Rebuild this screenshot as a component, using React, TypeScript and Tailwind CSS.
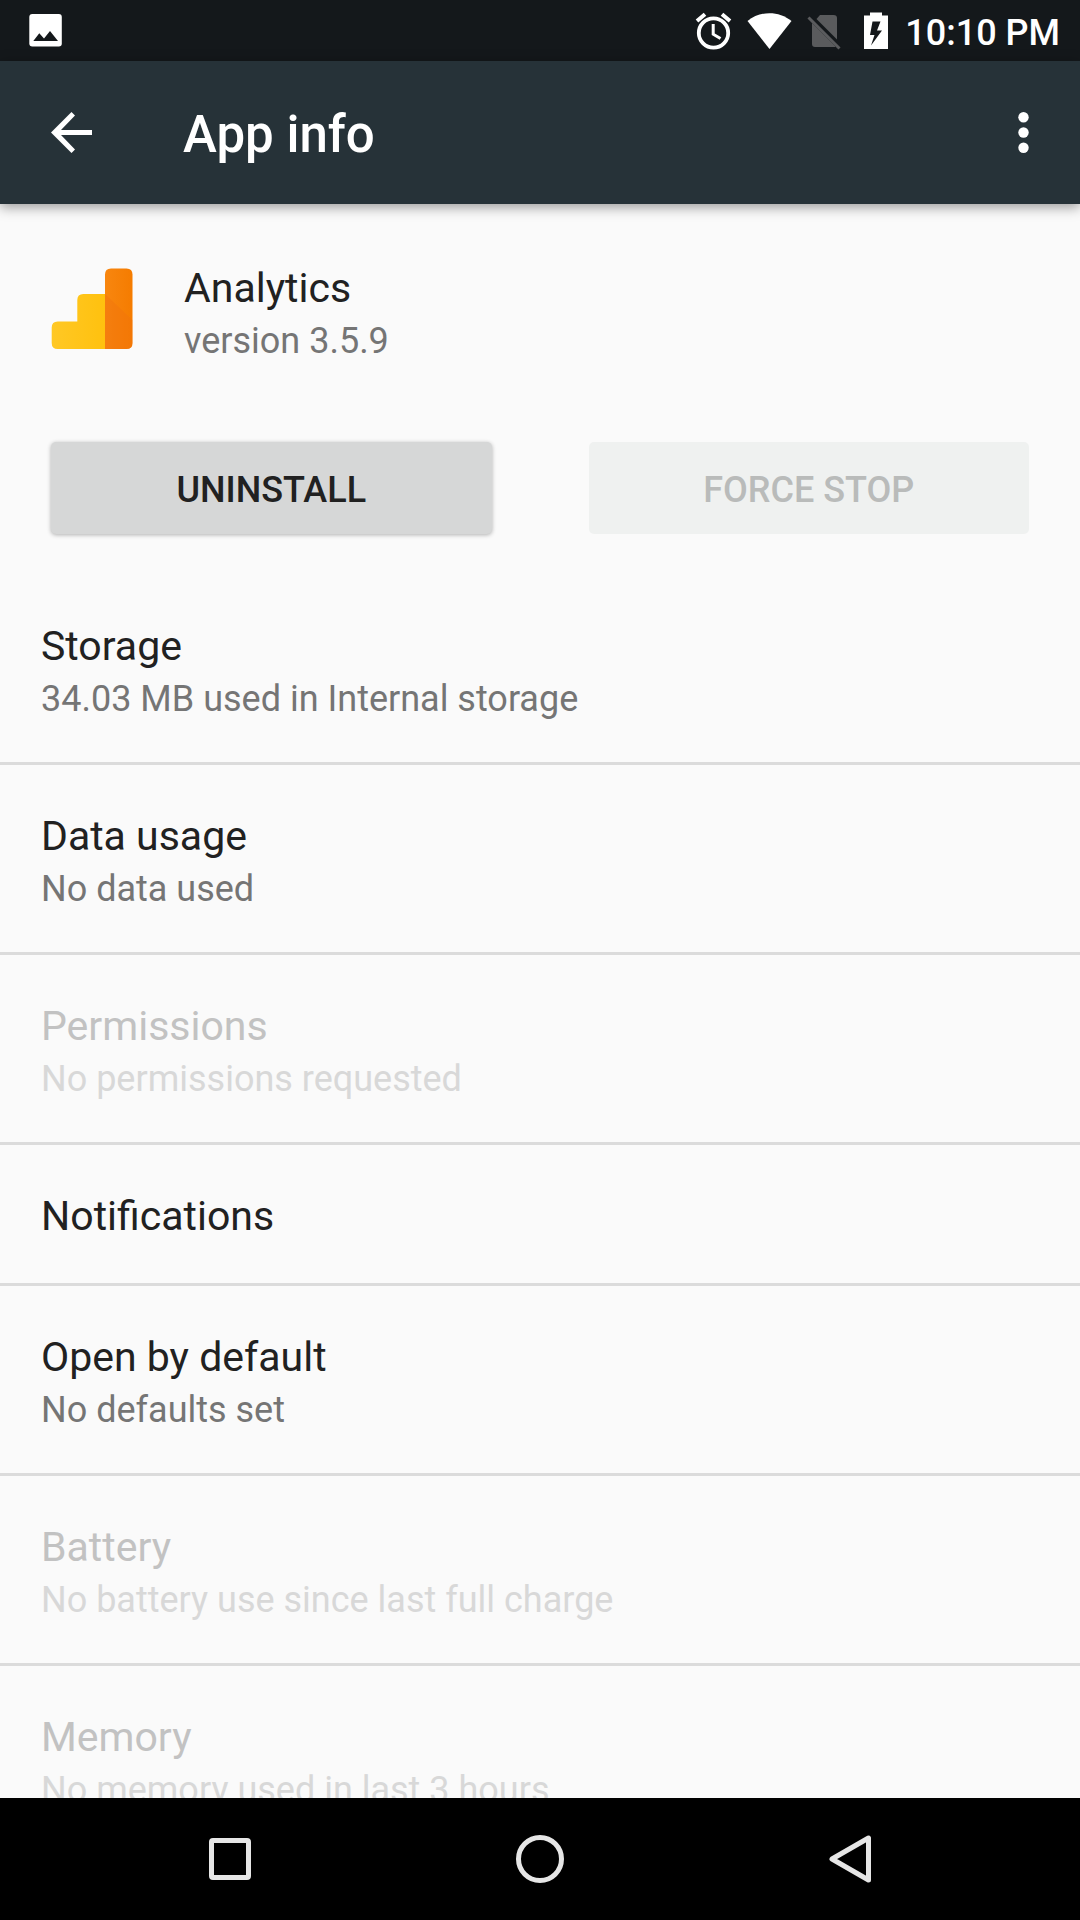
import type { ReactNode } from "react";

type InfoRow = {
  title: string;
  summary?: string;
  disabled?: boolean;
};

const rows: InfoRow[] = [
  { title: "Storage", summary: "34.03 MB used in Internal storage" },
  { title: "Data usage", summary: "No data used" },
  { title: "Permissions", summary: "No permissions requested", disabled: true },
  { title: "Notifications" },
  { title: "Open by default", summary: "No defaults set" },
  { title: "Battery", summary: "No battery use since last full charge", disabled: true },
  { title: "Memory", summary: "No memory used in last 3 hours", disabled: true },
];

function StatusBar() {
  return (
    <div className="flex h-[61px] shrink-0 items-center justify-between bg-[#14181b] pr-5 pl-7 text-white">
      <svg width="35" height="35" viewBox="0 0 35 35" aria-hidden="true">
        <rect x="1.3" y="1" width="32.5" height="32.5" rx="3" fill="#fff" />
        <path d="M5.3 28 11.3 20.3 16 25.5 22 18 30 28Z" fill="#14181b" />
      </svg>
      <div className="flex items-center">
        {/* Alarm */}
        <svg width="37" height="38" viewBox="0 0 37 38" aria-hidden="true">
          <circle cx="18.5" cy="21" r="14.7" fill="none" stroke="#fff" strokeWidth="3.8" />
          <path d="M18.2 12V22.2L25.5 26.5" fill="none" stroke="#fff" strokeWidth="3" />
          <path d="M2 9 10 2.3M35 9 27 2.3" stroke="#fff" strokeWidth="4" />
        </svg>
        {/* Wifi */}
        <svg className="ml-[15px]" width="45" height="38" viewBox="0 0 45 38" aria-hidden="true">
          <path d="M.5 9C13-1.5 32-1.5 44.5 9L22.5 37Z" fill="#fff" />
        </svg>
        {/* No SIM */}
        <svg className="ml-[15px]" width="34" height="38" viewBox="0 0 34 38" aria-hidden="true">
          <path d="M13 3H26.5Q30 3 30 6V27.5L9.5 7ZM5 11 28.5 34.5Q28 35 27 35H8Q5 35 5 32Z" fill="#5a5b5d" />
          <path d="M1.5 5.5 32.5 36.5" stroke="#5a5b5d" strokeWidth="3" />
        </svg>
        {/* Battery charging */}
        <svg className="ml-[23px]" width="24" height="38" viewBox="0 0 24 38" aria-hidden="true">
          <path d="M6 .5H18V3.5H24V37H0V3.5H6Z" fill="#fff" />
          <path d="M8.5 9.5H16.5L13 18.5H18L7 33.5L10.5 23H6Z" fill="#14181b" />
        </svg>
        <span className="mt-1 ml-[17px] text-[36px] leading-[42px] font-medium">10:10 PM</span>
      </div>
    </div>
  );
}

function AppBar() {
  return (
    <header className="relative z-10 flex h-[143px] shrink-0 items-center bg-[#263238] px-[41px] text-white shadow-[0_3px_12px_rgba(0,0,0,0.4)]">
      <button type="button" aria-label="Navigate up" className="w-[142px] shrink-0 pl-[10px]">
        <svg width="41" height="41" viewBox="0 0 41 41" aria-hidden="true">
          <path d="M41 18V23H10L24 37.5 20.5 41 0 20.5 20.5 0 24 3.5 10 18Z" fill="#fff" />
        </svg>
      </button>
      <h1 className="flex-1 pt-1 text-[51px] leading-[60px] font-medium">App info</h1>
      <button type="button" aria-label="More options" className="shrink-0 pr-[10px]">
        <svg width="11" height="41" viewBox="0 0 11 41" aria-hidden="true">
          <g fill="#fff">
            <circle cx="5.5" cy="5.2" r="5.2" />
            <circle cx="5.5" cy="20.5" r="5.2" />
            <circle cx="5.5" cy="35.8" r="5.2" />
          </g>
        </svg>
      </button>
    </header>
  );
}

function AnalyticsLogo() {
  return (
    <svg width="82" height="82" viewBox="0 0 82 82" className="mt-[7px] shrink-0" aria-hidden="true">
      <defs>
        <linearGradient id="bars" x1="0" x2="1">
          <stop offset="0" stopColor="#ffc825" />
          <stop offset="1" stopColor="#ffc10e" />
        </linearGradient>
        <linearGradient id="tall" x1="0" x2="1">
          <stop offset="0" stopColor="#f8860f" />
          <stop offset="1" stopColor="#f57c00" />
        </linearGradient>
      </defs>
      <path d="M6.7 53.5H26.3V32Q26.3 26 32.3 26H55V81H6.7Q.7 81 .7 75V59.5Q.7 53.5 6.7 53.5Z" fill="url(#bars)" />
      <path d="M54 81V6.5Q54 .5 60 .5H75.5Q81.5 .5 81.5 6.5V75Q81.5 81 75.5 81Z" fill="url(#tall)" />
      <path d="M54 26 81.5 52V75Q81.5 81 75.5 81H54Z" fill="#ed6c10" fillOpacity="0.3" />
    </svg>
  );
}

function PreferenceRow({ title, summary, disabled }: InfoRow) {
  return (
    <li className="border-b-[3px] border-[#dbdbdb] last:border-b-0">
      <button type="button" disabled={disabled} className="block w-full px-[41px] pt-[42px] pb-[38px] text-left">
        <span className={`block text-[41px] leading-[58px] ${disabled ? "text-[#c2c2c2]" : "text-[#212121]"}`}>
          {title}
        </span>
        {summary && (
          <span className={`block text-[36px] leading-[49px] ${disabled ? "text-[#d8d8d8]" : "text-[#757575]"}`}>
            {summary}
          </span>
        )}
      </button>
    </li>
  );
}

function NavButton({ label, children }: { label: string; children: ReactNode }) {
  return (
    <button type="button" aria-label={label} className="flex flex-1 items-center justify-center">
      <svg width="50" height="50" viewBox="0 0 50 50" fill="none" stroke="#e6e6e6" aria-hidden="true">
        {children}
      </svg>
    </button>
  );
}

export default function App() {
  return (
    <div className="flex h-screen flex-col bg-[#fafafa] font-['Roboto',sans-serif]">
      <StatusBar />
      <AppBar />

      <main className="min-h-0 flex-1 overflow-hidden">
        {/* App summary */}
        <div className="flex items-start gap-[51px] px-[51px] pt-[57px]">
          <AnalyticsLogo />
          <div>
            <h2 className="text-[41px] leading-[54px] text-[#212121]">Analytics</h2>
            <p className="text-[36px] leading-[52px] text-[#757575]">version 3.5.9</p>
          </div>
        </div>

        {/* Actions */}
        <div className="flex gap-[97px] px-[51px] pt-[75px] pb-[41px]">
          <button
            type="button"
            className="h-[92px] flex-1 rounded-[5px] bg-[#d6d7d7] pt-1 text-[36px] font-medium text-[#212121] shadow-[0_1px_4px_rgba(0,0,0,0.3)]"
          >
            UNINSTALL
          </button>
          <button
            type="button"
            disabled
            className="h-[92px] flex-1 rounded-[5px] bg-[#eff1f0] pt-1 text-[36px] font-medium text-[#b9bbba]"
          >
            FORCE STOP
          </button>
        </div>

        <ul>
          {rows.map((row) => (
            <PreferenceRow key={row.title} {...row} />
          ))}
        </ul>
      </main>

      <nav className="flex h-[122px] shrink-0 bg-black px-[75px]">
        <NavButton label="Recent apps">
          <rect x="6.5" y="6.5" width="37" height="37" rx="1.5" strokeWidth="5" />
        </NavButton>
        <NavButton label="Home">
          <circle cx="25" cy="25" r="21.5" strokeWidth="5" />
        </NavButton>
        <NavButton label="Back">
          <path d="M43.5 4V46L7 25Z" strokeWidth="5" strokeLinejoin="round" />
        </NavButton>
      </nav>
    </div>
  );
}
